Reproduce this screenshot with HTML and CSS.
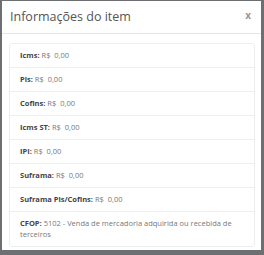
FILE: index.html
```html
<!DOCTYPE html>
<html lang="pt">
<head>
<meta charset="utf-8">
<link rel="stylesheet" href="styles.css">
</head>
<body>
<div class="modal">
  <div class="modal-header">
    <h4 class="modal-title">Informações do item</h4>
    <span class="close">x</span>
  </div>
  <div class="modal-body">
    <ul class="list">
      <li><b>Icms:</b> R$&nbsp; 0,00</li>
      <li><b>Pis:</b> R$&nbsp; 0,00</li>
      <li><b>Cofins:</b> R$&nbsp; 0,00</li>
      <li><b>Icms ST:</b> R$&nbsp; 0,00</li>
      <li><b>IPI:</b> R$&nbsp; 0,00</li>
      <li><b>Suframa:</b> R$&nbsp; 0,00</li>
      <li><b>Suframa Pis/Cofins:</b> R$&nbsp; 0,00</li>
      <li><b>CFOP:</b> 5102 - Venda de mercadoria adquirida ou recebida de terceiros</li>
    </ul>
  </div>
</div>
</body>
</html>
```

FILE: styles.css
```css
html, body {
  margin: 0;
  padding: 0;
}
body {
  width: 264px;
  height: 255px;
  background: #6d6f72;
  font-family: "Open Sans", "Liberation Sans", sans-serif;
  overflow: hidden;
}
.modal {
  margin: 1px 3px 0 2px;
  width: 259px;
  height: 249px;
  background: #fff;
  box-sizing: border-box;
}
.modal-header {
  height: 33px;
  box-sizing: border-box;
  border-bottom: 1px solid #e5e5e5;
  display: flex;
  align-items: center;
  justify-content: space-between;
  padding: 0 10px 1px 8px;
}
.modal-title {
  margin: 0;
  font-size: 12.5px;
  font-weight: 400;
  color: #555;
}
.close {
  font-size: 10px;
  color: #999;
  font-weight: 700;
  margin-top: -3px;
}
.modal-body {
  padding: 9px 6px 0 7px;
}
.list {
  list-style: none;
  margin: 0;
  padding: 0;
  border: 1px solid #eee;
  border-radius: 3px;
}
.list li {
  font-size: 7.5px;
  color: #777;
  padding: 5.5px 8px 6.5px 10px;
  line-height: 11px;
  border-top: 1px solid #eee;
}
.list li:first-child {
  border-top: 0;
}
.list li b {
  color: #444;
  font-weight: 700;
}
```
